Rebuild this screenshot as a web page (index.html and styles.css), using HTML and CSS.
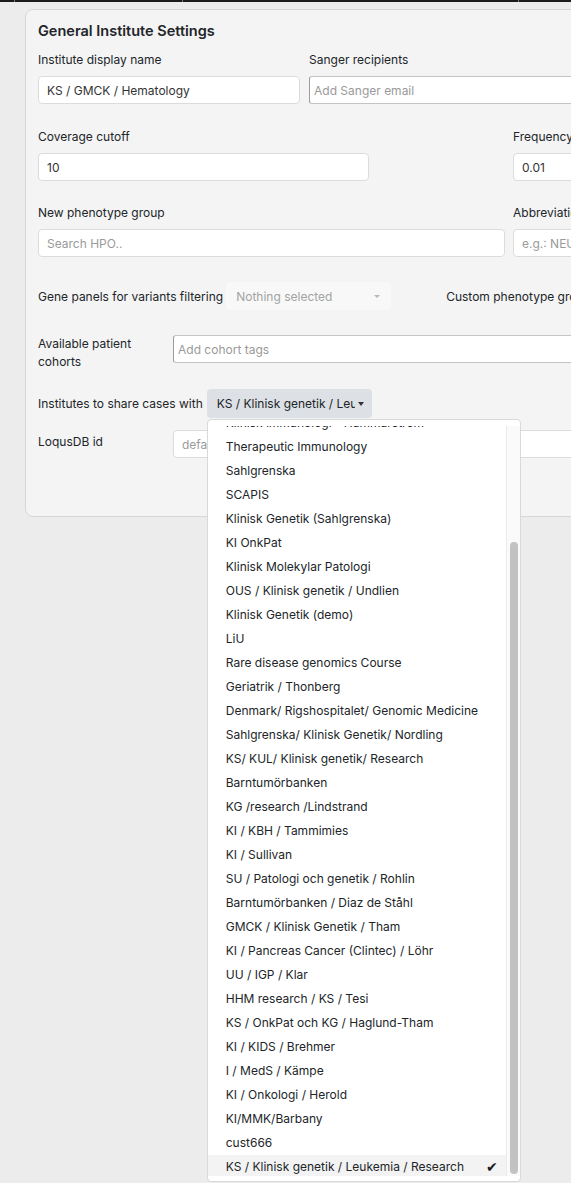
FILE: index.html
```html
<!DOCTYPE html>
<html lang="en">
<head>
    <meta charset="UTF-8">
    <meta name="viewport" content="width=device-width, initial-scale=1.0">
    <title>Institute Settings</title>
    <link rel="stylesheet" href="styles.css">
</head>
<body>
    <div class="topbar"></div>
    <div class="card">
        <h5 class="card-title">General Institute Settings</h5>

        <div class="row row-first">
            <div class="field col-name">
                <label for="display_name">Institute display name</label>
                <input class="form-control" type="text" id="display_name" value="KS / GMCK / Hematology">
            </div>
            <div class="field col-side">
                <label for="sanger">Sanger recipients</label>
                <input class="tag-input" type="text" id="sanger" placeholder="Add Sanger email">
            </div>
        </div>

        <div class="row row-coverage">
            <div class="field col-coverage">
                <label for="coverage">Coverage cutoff</label>
                <input class="form-control" type="text" id="coverage" value="10">
            </div>
            <div class="field col-side col-freq">
                <label for="frequency">Frequency cutoff</label>
                <input class="form-control" type="text" id="frequency" value="0.01">
            </div>
        </div>

        <div class="row row-pheno">
            <div class="field col-pheno">
                <label for="hpo">New phenotype group</label>
                <input class="form-control" type="text" id="hpo" placeholder="Search HPO..">
            </div>
            <div class="field col-side">
                <label for="abbr">Abbreviation</label>
                <input class="form-control" type="text" id="abbr" placeholder="e.g.: NEUR">
            </div>
        </div>

        <div class="row inline-row row-panels">
            <label>Gene panels for variants filtering</label>
            <div class="picker">
                <span>Nothing selected</span>
                <span class="picker-caret"></span>
            </div>
            <label class="custom-label">Custom phenotype groups</label>
        </div>

        <div class="row side-row row-cohorts">
            <label class="side-label" for="cohorts">Available patient cohorts</label>
            <input class="tag-input wide" type="text" id="cohorts" placeholder="Add cohort tags">
        </div>

        <div class="row inline-row row-share">
            <label>Institutes to share cases with</label>
            <div class="share-wrap">
                <button class="share-btn" type="button">
                    <span class="share-text">KS / Klinisk genetik / Leukemia / Research</span>
                    <span class="btn-caret"></span>
                </button>
                <div class="menu">
                    <div class="menu-list">
                        <ul>
                            <li>Klinisk immunologi - Hammarström</li>
                            <li>Therapeutic Immunology</li>
                            <li>Sahlgrenska</li>
                            <li>SCAPIS</li>
                            <li>Klinisk Genetik (Sahlgrenska)</li>
                            <li>KI OnkPat</li>
                            <li>Klinisk Molekylar Patologi</li>
                            <li>OUS / Klinisk genetik / Undlien</li>
                            <li>Klinisk Genetik (demo)</li>
                            <li>LiU</li>
                            <li>Rare disease genomics Course</li>
                            <li>Geriatrik / Thonberg</li>
                            <li>Denmark/ Rigshospitalet/ Genomic Medicine</li>
                            <li>Sahlgrenska/ Klinisk Genetik/ Nordling</li>
                            <li>KS/ KUL/ Klinisk genetik/ Research</li>
                            <li>Barntumörbanken</li>
                            <li>KG /research /Lindstrand</li>
                            <li>KI / KBH / Tammimies</li>
                            <li>KI / Sullivan</li>
                            <li>SU / Patologi och genetik / Rohlin</li>
                            <li>Barntumörbanken / Diaz de Ståhl</li>
                            <li>GMCK / Klinisk Genetik / Tham</li>
                            <li>KI / Pancreas Cancer (Clintec) / Löhr</li>
                            <li>UU / IGP / Klar</li>
                            <li>HHM research / KS / Tesi</li>
                            <li>KS / OnkPat och KG / Haglund-Tham</li>
                            <li>KI / KIDS / Brehmer</li>
                            <li>I / MedS / Kämpe</li>
                            <li>KI / Onkologi / Herold</li>
                            <li>KI/MMK/Barbany</li>
                            <li>cust666</li>
                            <li class="selected">KS / Klinisk genetik / Leukemia / Research <span class="check">✔</span></li>
                        </ul>
                    </div>
                    <div class="menu-track"><div class="menu-thumb"></div></div>
                </div>
            </div>
        </div>

        <div class="row side-row row-loqus">
            <label class="side-label" for="loqus">LoqusDB id</label>
            <input class="form-control wide" type="text" id="loqus" placeholder="default">
        </div>
    </div>
</body>
</html>
```

FILE: styles.css
```css
html {
    overflow: hidden;
}
body {
    margin: 0;
    min-height: 1183px;
    background: #ececec;
    font-family: Inter, "Noto Sans", sans-serif;
    font-size: 12px;
    color: #212529;
}
.topbar {
    height: 2px;
    background:
        linear-gradient(90deg, transparent 14px, #777 14px, #777 15px, transparent 15px),
        linear-gradient(90deg, transparent 182px, #777 182px, #777 183px, transparent 183px),
        linear-gradient(90deg, transparent 518px, #777 518px, #777 519px, transparent 519px),
        #1c1c1c;
}
.card {
    margin: 7px 0 0 25px;
    width: 900px;
    background: #f4f4f4;
    border: 1px solid #d6d6d6;
    border-radius: 8px;
    padding: 11px 12px 58px;
}
.card-title {
    margin: 0;
    font-size: 14.5px;
    font-weight: 600;
    line-height: 20px;
}
.row {
    display: flex;
}
.row-first { margin-top: 10px; gap: 9px; }
.row-coverage { margin-top: 24px; }
.row-pheno { margin-top: 23px; gap: 8px; }
.row-panels { margin-top: 25px; }
.row-cohorts { margin-top: 25px; }
.row-share { margin-top: 18px; }
.row-loqus { margin-top: 12px; }

.field label {
    display: block;
    line-height: 18px;
    margin-bottom: 7px;
}
.col-name { width: 262px; }
.col-coverage { width: 331px; }
.col-freq { margin-left: 144px; }
.col-pheno { width: 467px; }
.col-side { width: 320px; }

input {
    font-family: inherit;
    font-size: 12px;
    color: #333;
    box-sizing: border-box;
    width: 100%;
    height: 28px;
    margin: 0;
    background: #fff;
    outline: none;
}
input::placeholder {
    color: #9a9a9a;
}
.form-control {
    border: 1px solid #dcdcdc;
    border-radius: 4px;
    padding: 0 8px;
}
.tag-input {
    border: 1px solid #c4c4c4;
    border-left-color: #9c9c9c;
    border-radius: 3px;
    padding: 0 4px;
}

.inline-row {
    align-items: center;
}
.picker {
    display: flex;
    align-items: center;
    justify-content: space-between;
    width: 165px;
    height: 28px;
    box-sizing: border-box;
    margin-left: 3px;
    padding: 0 11px 0 10px;
    background: #f8f8f8;
    border-radius: 4px;
    color: #a3a3a3;
}
.picker-caret {
    border-top: 3px solid #b8b8b8;
    border-left: 3px solid transparent;
    border-right: 3px solid transparent;
}
.custom-label {
    margin-left: 55px;
    white-space: nowrap;
}

.side-row {
    align-items: flex-start;
}
.side-label {
    width: 120px;
    margin-right: 15px;
    line-height: 18px;
    flex-shrink: 0;
}
.row-loqus .side-label {
    padding-top: 3px;
}
.wide {
    width: 500px;
}

.share-wrap {
    position: relative;
    margin-left: 4px;
}
.share-btn {
    display: flex;
    align-items: center;
    width: 165px;
    height: 29px;
    padding: 0 8px 0 10px;
    background: #dde0e4;
    border: none;
    border-radius: 4px;
    font-family: inherit;
    font-size: 12px;
    color: #212529;
}
.share-text {
    width: 139px;
    overflow: hidden;
    white-space: nowrap;
    text-align: left;
}
.btn-caret {
    margin-left: 3px;
    border-top: 4px solid #333;
    border-left: 3px solid transparent;
    border-right: 3px solid transparent;
}

/* dropdown opened under the share button */
.menu {
    position: absolute;
    top: calc(100% + 1px);
    left: 0;
    z-index: 10;
    display: flex;
    width: 314px;
    box-sizing: border-box;
    padding: 6px 0 5px;
    background: #fff;
    border: 1px solid #d9d9d9;
    border-radius: 4px;
}
.menu-list {
    flex: 1;
    height: 750px;
    overflow: hidden;
}
.menu-list ul {
    list-style: none;
    margin: -15px 0 0;
    padding: 0;
}
.menu-list li {
    display: flex;
    justify-content: space-between;
    align-items: center;
    height: 24px;
    line-height: 24px;
    padding: 0 8px 0 18px;
    white-space: nowrap;
    color: #212529;
}
.menu-list li.selected {
    background: #f3f3f3;
}
.check {
    font-family: "DejaVu Sans", sans-serif;
    font-size: 14px;
    color: #1a1a1a;
}
.menu-track {
    width: 14px;
    height: 750px;
    background: #fafafa;
    border-left: 1px solid #ebebeb;
    padding-top: 116px;
    box-sizing: border-box;
}
.menu-thumb {
    width: 8px;
    height: 632px;
    margin-left: 3px;
    background: #c2c2c2;
    border-radius: 4px;
}
```
